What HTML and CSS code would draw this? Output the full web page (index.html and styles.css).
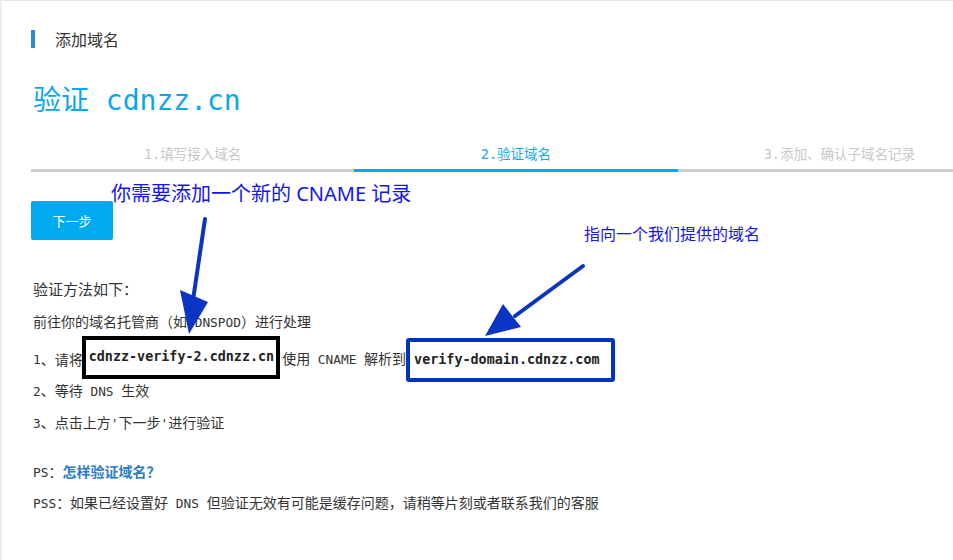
FILE: index.html
```html
<!DOCTYPE html>
<html lang="zh">
<head>
<meta charset="utf-8">
<title>添加域名</title>
<link rel="stylesheet" href="styles.css">
</head>
<body>
<div class="page">
  <div class="section-head"><span class="bar"></span><span class="section-title">添加域名</span></div>
  <h1 class="title">验证 cdnzz.cn</h1>
  <div class="steps">
    <div class="step">1.填写接入域名</div>
    <div class="step active">2.验证域名</div>
    <div class="step">3.添加、确认子域名记录</div>
  </div>
  <button class="btn">下一步</button>
  <div class="method">
    <p class="method-title">验证方法如下：</p>
    <p class="line">前往你的域名托管商（如<span class="en"> DNSPOD</span>）进行处理</p>
    <p class="line row"><span class="en">1</span>、请将<span class="code box-black">cdnzz-verify-2.cdnzz.cn</span><span class="after-black">使用<span class="en"> CNAME </span>解析到</span><span class="code box-blue">verify-domain.cdnzz.com</span></p>
    <p class="line"><span class="en">2</span>、等待<span class="en"> DNS </span>生效</p>
    <p class="line"><span class="en">3</span>、点击上方<span class="en">'</span>下一步<span class="en">'</span>进行验证</p>
    <p class="line ps"><span class="en">PS</span>：<a class="link" href="#">怎样验证域名？</a></p>
    <p class="line pss"><span class="en">PSS</span>：如果已经设置好<span class="en"> DNS </span>但验证无效有可能是缓存问题，请稍等片刻或者联系我们的客服</p>
  </div>

  <div class="note note-1">你需要添加一个新的 CNAME 记录</div>
  <div class="note note-2">指向一个我们提供的域名</div>
  <svg class="arrows" width="953" height="560" viewBox="0 0 953 560">
    <line x1="205" y1="219" x2="193" y2="300" stroke="#0a34c4" stroke-width="4" stroke-linecap="round"/>
    <polygon points="180,290 208,302 189,334" fill="#0a34c4"/>
    <line x1="583" y1="266" x2="515" y2="316" stroke="#0a34c4" stroke-width="4" stroke-linecap="round"/>
    <polygon points="503,304 521,327 485,336" fill="#0a34c4"/>
  </svg>
</div>
</body>
</html>
```
FILE: styles.css
```css
html, body {
  margin: 0;
  padding: 0;
  background: #fff;
  overflow: hidden;
}
body {
  width: 953px;
  height: 560px;
  font-family: "DejaVu Sans Mono", "Noto Sans CJK SC", monospace;
  color: #333;
}
.page {
  position: relative;
  box-sizing: border-box;
  width: 1010px;
  height: 560px;
  border-top: 1px solid #e6e6e6;
  border-left: 2px solid #ececec;
  padding: 28px 0 0 29px;
}
.section-head {
  display: flex;
  align-items: center;
  height: 20px;
}
.bar {
  width: 4px;
  height: 18px;
  background: #2f86dc;
}
.section-title {
  margin-left: 20px;
  font-family: "Noto Sans CJK SC", sans-serif;
  font-size: 16px;
  color: #333;
}
.title {
  margin: 36px 0 0 2px;
  font-size: 28px;
  line-height: 32px;
  font-weight: normal;
  color: #0aa6ee;
}
.steps {
  display: flex;
  width: 970px;
  margin-top: 27px;
}
.step {
  flex: 1;
  text-align: center;
  font-size: 13.5px;
  line-height: 20px;
  padding-bottom: 5px;
  border-bottom: 3px solid #cccccc;
  color: #c8c8c8;
}
.step.active {
  color: #14a8f0;
  border-bottom-color: #00aaf5;
}
.btn {
  display: block;
  margin-top: 29px;
  width: 82px;
  height: 39px;
  border: none;
  border-radius: 2px;
  background: #00aaef;
  color: #fff;
  font-family: "Noto Sans CJK SC", sans-serif;
  font-size: 13px;
  padding: 0;
}
.method {
  margin-top: 39px;
  margin-left: 2px;
}
.method p {
  margin: 0;
}
.method-title {
  font-size: 15px;
  line-height: 22px;
}
.line {
  font-size: 14px;
  line-height: 20px;
  margin-top: 11px !important;
}
.en {
  font-size: 12.8px;
  white-space: pre;
}
.row {
  display: flex;
  align-items: center;
  margin-top: 16px !important;
}
.code {
  display: inline-flex;
  align-items: center;
  box-sizing: border-box;
  font-weight: bold;
  font-size: 13.4px;
  color: #222;
}
.box-black {
  height: 43px;
  border: 4px solid #000;
  padding: 0 2px 0 3px;
  margin: -16px 2px -11px -1px;
}
.after-black {
  margin-right: 0;
}
.box-blue {
  height: 44px;
  border: 4px solid #0033bb;
  border-radius: 3px;
  padding: 0 11px 0 4px;
  margin: -12px 0 -12px 0;
}
.ps {
  margin-top: 28px !important;
}
.pss {
  margin-top: 10px !important;
}
.link {
  color: #2b7bc6;
  font-weight: bold;
  text-decoration: none;
}
.note {
  position: absolute;
  font-family: "Noto Sans", "Noto Sans CJK SC", sans-serif;
  color: #1414f0;
  white-space: nowrap;
}
.note-1 {
  left: 109px;
  top: 179px;
  font-size: 20px;
  line-height: 28px;
}
.note-2 {
  left: 582px;
  top: 222px;
  font-size: 16px;
  line-height: 22px;
}
.arrows {
  position: absolute;
  left: -2px;
  top: -1px;
  pointer-events: none;
}
```
